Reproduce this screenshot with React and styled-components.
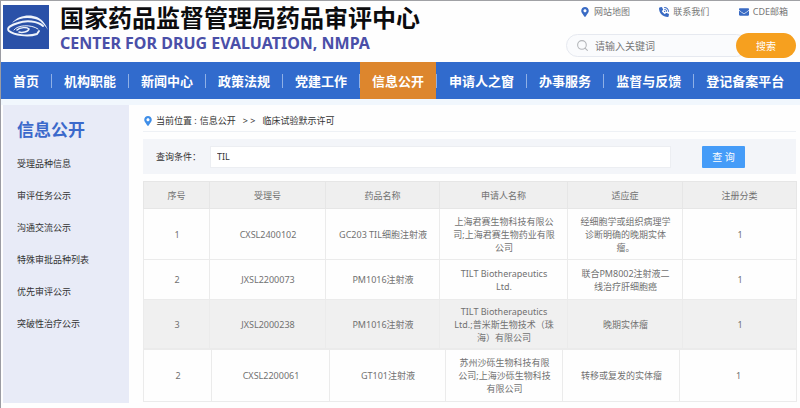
import React, { useState } from 'react';
import styled, { createGlobalStyle } from 'styled-components';
import { FaMapMarkerAlt, FaEnvelope } from 'react-icons/fa';
import { FaPhoneVolume } from 'react-icons/fa6';
import { FiSearch } from 'react-icons/fi';

const GlobalStyle = createGlobalStyle`
  * {
    box-sizing: border-box;
  }

  body {
    margin: 0;
    background: #fefefe;
    color: #333;
    font-family: 'Noto Sans', 'Noto Sans CJK SC', sans-serif;
    font-size: 9px;
  }

  a {
    color: inherit;
    text-decoration: none;
  }

  button, input {
    font-family: inherit;
  }
`;

const Page = styled.div`
  min-height: 100vh;
  border-top: 1px solid #a0a1a5;
  border-left: 1px solid #9b9ca3;
`;

const Header = styled.header`
  display: flex;
  justify-content: space-between;
  height: 61px;
  padding: 0 4px 0 2px;
`;

const Brand = styled.a`
  display: flex;
  align-items: center;
  gap: 11px;
  height: 52px;
`;

const BrandText = styled.div`
  display: flex;
  flex-direction: column;
`;

const SiteName = styled.h1`
  margin: 0;
  color: #0c0c0e;
  font-family: 'Noto Sans CJK SC', sans-serif;
  font-size: 24px;
  font-weight: 700;
  line-height: 32px;
  white-space: nowrap;
`;

const SiteNameEn = styled.div`
  color: #4a4fa8;
  font-size: 16px;
  font-weight: 700;
  line-height: 20px;
  white-space: nowrap;
`;

const Tools = styled.div`
  display: flex;
  flex-direction: column;
  gap: 14px;
  width: 230px;
  padding-top: 3px;
`;

const QuickLinks = styled.div`
  display: flex;
  justify-content: space-between;
  padding: 0 8px 0 14px;
`;

const QuickLink = styled.a`
  display: flex;
  align-items: center;
  gap: 4px;
  height: 15px;
  color: #777;
  white-space: nowrap;

  svg {
    color: #3a6bc4;
  }
`;

const SearchForm = styled.form`
  display: flex;
  height: 25px;
`;

const SearchBox = styled.label`
  display: flex;
  flex: 1;
  align-items: center;
  gap: 6px;
  min-width: 0;
  height: 23px;
  margin: 1px -12px 0 0;
  padding: 0 12px 0 9px;
  border: 1px solid #e6e9f0;
  border-radius: 12px;
  background: #fafbfd;
  color: #b4b6ba;
`;

const SearchInput = styled.input`
  flex: 1;
  min-width: 0;
  padding: 0;
  border: 0;
  outline: none;
  background: transparent;
  font-size: 10px;

  &::placeholder {
    color: #777;
    opacity: 1;
  }
`;

const SearchButton = styled.button`
  position: relative;
  flex: none;
  width: 60px;
  padding: 0;
  border: 0;
  border-radius: 13px;
  background: #f6a01f;
  color: #fff;
  font-size: 10px;
  cursor: pointer;
`;

const Nav = styled.nav`
  display: flex;
  height: 37px;
  background: #316bcd;
`;

const NavItem = styled.a`
  display: flex;
  align-items: center;
  padding: 0 12px;
  background: ${props => props.$active ? '#dd862d' : 'transparent'};
  color: #fff;
  font-size: 13px;
  font-weight: 700;
  white-space: nowrap;
`;

const NavDivider = styled.span`
  align-self: center;
  width: 1px;
  height: 14px;
  background: #8fb0e6;
`;

const Main = styled.div`
  display: flex;
  gap: 14px;
  padding: 0 4px 4px 2px;
  border-top: 6px solid #f1f7fd;
`;

const Sidebar = styled.aside`
  flex: none;
  width: 126px;
  min-height: 298px;
  padding: 14px 14px 0;
  background: #e8ebf7;
`;

const SidebarTitle = styled.h2`
  margin: 0 0 7px;
  color: #3b69cb;
  font-size: 17px;
  font-weight: 700;
  line-height: 22px;
`;

const SidebarLink = styled.a`
  display: block;
  color: #333;
  line-height: 32px;
  white-space: nowrap;
`;

const Content = styled.main`
  flex: 1;
  min-width: 0;
`;

const Breadcrumb = styled.div`
  display: flex;
  align-items: center;
  gap: 3px;
  height: 27px;
  padding-top: 5px;
  border-bottom: 1px solid #eef1f5;
  white-space: nowrap;

  svg {
    color: #3f8ee8;
  }
`;

const Separator = styled.span`
  padding: 0 4px;
`;

const QueryForm = styled.form`
  display: flex;
  align-items: center;
  height: 35px;
  margin: 7px 0;
  padding-left: 13px;
  background: #f3f5f9;
`;

const QueryInput = styled.input`
  flex: 1;
  min-width: 0;
  height: 22px;
  margin: 0 31px 0 9px;
  padding: 0 6px;
  border: 1px solid #eceef2;
  outline: none;
  background: #fff;
  color: #333;
  font-size: 9px;
`;

const QueryButton = styled.button`
  width: 43px;
  height: 22px;
  margin-right: 51px;
  padding: 0;
  border: 0;
  border-radius: 1px;
  background: #459cf8;
  color: #fff;
  font-size: 10px;
  white-space: pre;
  cursor: pointer;
`;

const Table = styled.table`
  width: 100%;
  border-collapse: collapse;
  table-layout: fixed;
  color: #717171;
  line-height: 13px;
  text-align: center;
`;

const HeadCell = styled.th`
  height: 27px;
  padding: 0;
  border: 1px solid #e6e6e6;
  background: #efefef;
  font-weight: 400;
`;

const Row = styled.tr`
  height: ${props => props.$height}px;
  background: ${props => props.$shaded ? '#f0f0f0' : '#fefefe'};
`;

const Cell = styled.td`
  padding: 0 11px 0 12px;
  border: 1px solid #ebebeb;
`;

const navItems = [
  '首页', '机构职能', '新闻中心', '政策法规', '党建工作',
  '信息公开', '申请人之窗', '办事服务', '监督与反馈', '登记备案平台',
];

const sidebarItems = [
  '受理品种信息', '审评任务公示', '沟通交流公示',
  '特殊审批品种列表', '优先审评公示', '突破性治疗公示',
];

const columns = ['序号', '受理号', '药品名称', '申请人名称', '适应症', '注册分类'];

const firstWidths = [66, 116, 114, 128, 115, 114];
const secondWidths = [68, 118, 116, 117, 117, 117];

const firstRows = [
  { height: 51, cells: ['1', 'CXSL2400102', 'GC203 TIL细胞注射液', '上海君赛生物科技有限公司;上海君赛生物药业有限公司', '经细胞学或组织病理学诊断明确的晚期实体瘤。', '1'] },
  { height: 40, cells: ['2', 'JXSL2200073', 'PM1016注射液', 'TILT Biotherapeutics Ltd.', '联合PM8002注射液二线治疗肝细胞癌', '1'] },
  { height: 49, shaded: true, cells: ['3', 'JXSL2000238', 'PM1016注射液', 'TILT Biotherapeutics Ltd.;普米斯生物技术（珠海）有限公司', '晚期实体瘤', '1'] },
];

const secondRows = [
  { height: 52, cells: ['2', 'CXSL2200061', 'GT101注射液', '苏州沙砾生物科技有限公司;上海沙砾生物科技有限公司', '转移或复发的实体瘤', '1'] },
];

const Logo = () => (
  <svg width="46" height="44" viewBox="0 0 46 44" aria-hidden="true">
    <rect width="46" height="44" fill="#2a51a8" />
    <path d="M9 18C15 10 27 9 34 12C40 15 43 20 45 25C41 19 37 15 32 14C24 12 16 13 9 18Z" fill="#eef3fb" />
    <g fill="none" stroke="#eef3fb" strokeLinecap="round">
      <path d="M40 21C35 16 23 15 15 18C8 20 3 23 6 26C11 30 25 32 34 29L36 26" strokeWidth="2" />
      <path d="M11 25C14 20 28 19 35 24" strokeWidth="1" />
      <path d="M14 25C17 22 24 22 26 24C25 27 19 28 16 27" strokeWidth="1.5" />
    </g>
  </svg>
);

const ResultTable = ({ widths, rows, showHead }) => (
  <Table>
    <colgroup>
      {widths.map((width, i) => <col key={i} width={width} />)}
    </colgroup>
    {showHead && (
      <thead>
        <tr>
          {columns.map(name => <HeadCell key={name} scope="col">{name}</HeadCell>)}
        </tr>
      </thead>
    )}
    <tbody>
      {rows.map(row => (
        <Row key={row.cells[1]} $height={row.height} $shaded={row.shaded}>
          {row.cells.map((text, i) => <Cell key={i}>{text}</Cell>)}
        </Row>
      ))}
    </tbody>
  </Table>
);

const App = () => {
  const [keyword, setKeyword] = useState('');
  const [query, setQuery] = useState('TIL');

  return (
    <Page>
      <GlobalStyle />
      <Header>
        <Brand href="#">
          <Logo />
          <BrandText>
            <SiteName>国家药品监督管理局药品审评中心</SiteName>
            <SiteNameEn>CENTER FOR DRUG EVALUATION, NMPA</SiteNameEn>
          </BrandText>
        </Brand>
        <Tools>
          <QuickLinks>
            <QuickLink href="#"><FaMapMarkerAlt size={10} />网站地图</QuickLink>
            <QuickLink href="#"><FaPhoneVolume size={10} />联系我们</QuickLink>
            <QuickLink href="#"><FaEnvelope size={10} />CDE邮箱</QuickLink>
          </QuickLinks>
          <SearchForm onSubmit={(e) => e.preventDefault()}>
            <SearchBox>
              <FiSearch size={13} />
              <SearchInput
                aria-label="搜索"
                placeholder="请输入关键词"
                value={keyword}
                onChange={(e) => setKeyword(e.target.value)}
              />
            </SearchBox>
            <SearchButton type="submit">搜索</SearchButton>
          </SearchForm>
        </Tools>
      </Header>

      <Nav>
        {navItems.map((item, i) => (
          <React.Fragment key={item}>
            {i > 0 && <NavDivider />}
            <NavItem href="#" $active={item === '信息公开'}>{item}</NavItem>
          </React.Fragment>
        ))}
      </Nav>

      <Main>
        <Sidebar>
          <SidebarTitle>信息公开</SidebarTitle>
          {sidebarItems.map(item => <SidebarLink key={item} href="#">{item}</SidebarLink>)}
        </Sidebar>
        <Content>
          <Breadcrumb>
            <FaMapMarkerAlt size={10} />
            <span>当前位置 :</span>
            <a href="#">信息公开</a>
            <Separator>&gt; &gt;</Separator>
            <span>临床试验默示许可</span>
          </Breadcrumb>
          <QueryForm onSubmit={(e) => e.preventDefault()}>
            <label htmlFor="query">查询条件：</label>
            <QueryInput id="query" value={query} onChange={(e) => setQuery(e.target.value)} />
            <QueryButton type="submit">查 询</QueryButton>
          </QueryForm>
          <ResultTable widths={firstWidths} rows={firstRows} showHead />
          <ResultTable widths={secondWidths} rows={secondRows} />
        </Content>
      </Main>
    </Page>
  );
};

export default App;
